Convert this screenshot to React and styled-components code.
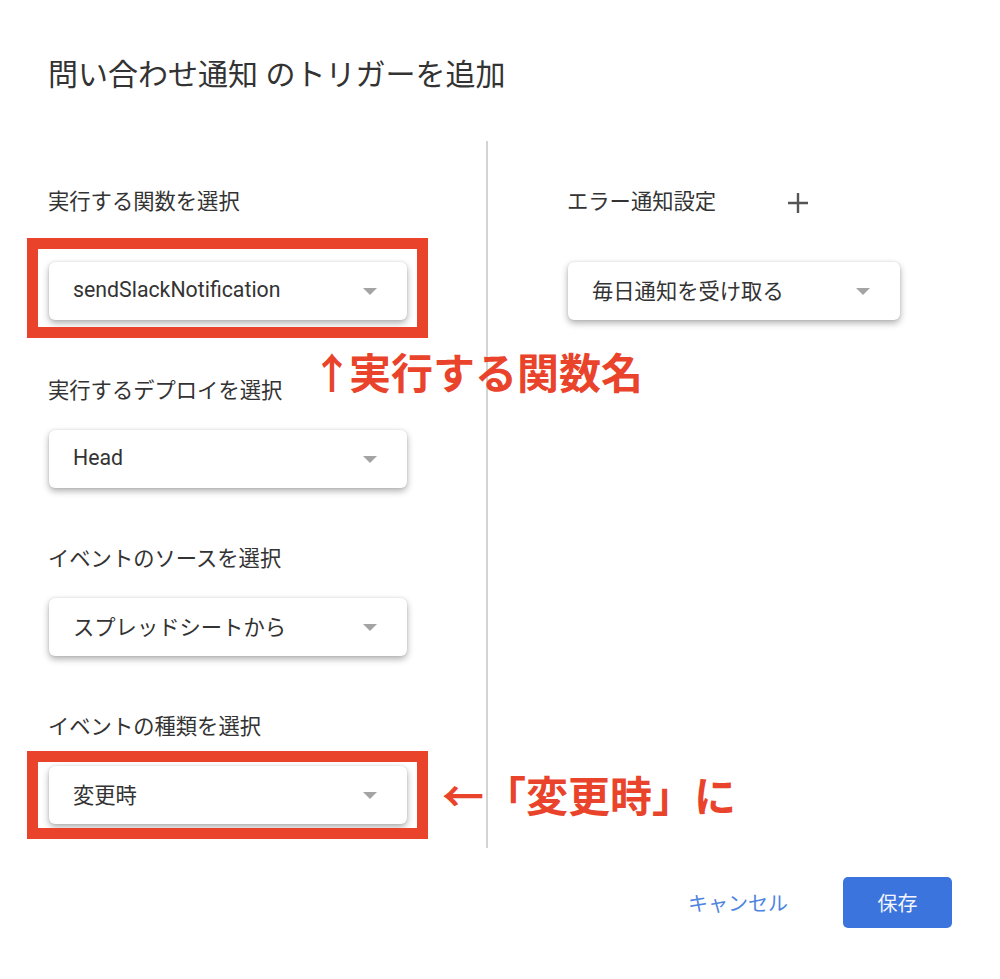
import styled, { createGlobalStyle } from "styled-components";

const GlobalStyle = createGlobalStyle`
  body {
    margin: 0;
    background: #ffffff;
    font-family: "Roboto", "Noto Sans CJK JP", sans-serif;
  }
`;

export default function App() {
  return (
    <Dialog>
      <GlobalStyle />
      <Title>問い合わせ通知 のトリガーを追加</Title>
      <Body>
        <Column>
          <Field $gap={46}>
            <Label>実行する関数を選択</Label>
            <Highlight $top={24} $bottom={18}>
              <Select value="sendSlackNotification" />
            </Highlight>
          </Field>
          <Field $gap={25}>
            <Label>実行するデプロイを選択</Label>
            <Select value="Head" />
          </Field>
          <Field $gap={25}>
            <Label>イベントのソースを選択</Label>
            <Select value="スプレッドシートから" />
          </Field>
          <Field $gap={25}>
            <Label>イベントの種類を選択</Label>
            <Highlight $top={15} $bottom={15}>
              <Select value="変更時" />
            </Highlight>
          </Field>
        </Column>
        <Divider />
        <Column $right>
          <Field $gap={46}>
            <LabelRow>
              <Label>エラー通知設定</Label>
              <AddButton aria-label="追加">
                <svg width="20" height="20" viewBox="0 0 20 20">
                  <path d="M10 0v20M0 10h20" stroke="#555" strokeWidth="2.4" />
                </svg>
              </AddButton>
            </LabelRow>
            <Select value="毎日通知を受け取る" $width={332} />
          </Field>
        </Column>
      </Body>
      <Footer>
        <TextButton>キャンセル</TextButton>
        <PrimaryButton>保存</PrimaryButton>
      </Footer>
      <Note $x={311} $y={350}>
        <Arrow>↑</Arrow>実行する関数名
      </Note>
      <Note $x={442} $y={773}>←「変更時」に</Note>
    </Dialog>
  );
}

function Select({ value, $width }) {
  return (
    <SelectBox $width={$width}>
      <span>{value}</span>
      <Caret />
    </SelectBox>
  );
}

const Dialog = styled.div`
  position: relative;
  width: 1000px;
  height: 979px;
  box-sizing: border-box;
  padding: 57px 48px 0;
  background: #ffffff;
  color: #333;
`;

const Title = styled.h1`
  margin: 0;
  font-size: 30px;
  line-height: 36px;
  font-weight: 400;
  color: #333;
`;

const Body = styled.div`
  display: flex;
  margin-top: 48px;
  height: 707px;
`;

const Column = styled.div`
  display: flex;
  flex-direction: column;
  align-items: flex-start;
  gap: 57px;
  width: ${(p) => (p.$right ? "auto" : "438px")};
  padding-top: 47px;
  padding-left: ${(p) => (p.$right ? "79px" : "0")};
  box-sizing: border-box;
`;

const Divider = styled.div`
  width: 2px;
  flex-shrink: 0;
  background: #d4d4d4;
`;

const Field = styled.div`
  display: flex;
  flex-direction: column;
  align-items: flex-start;
  gap: ${(p) => p.$gap}px;
`;

const LabelRow = styled.div`
  display: flex;
  align-items: center;
`;

const Label = styled.div`
  font-size: 21.3px;
  line-height: 28px;
  color: #333;
`;

const AddButton = styled.button`
  display: flex;
  align-items: center;
  justify-content: center;
  margin-left: 72px;
  margin-top: 2px;
  padding: 0;
  border: none;
  background: none;
`;

const Highlight = styled.div`
  position: relative;
  &::before {
    content: "";
    position: absolute;
    top: -${(p) => p.$top}px;
    bottom: -${(p) => p.$bottom}px;
    left: -21px;
    right: -21px;
    border: 11px solid #e9442b;
    pointer-events: none;
  }
`;

const SelectBox = styled.div`
  display: flex;
  align-items: center;
  justify-content: space-between;
  width: ${(p) => p.$width || 358}px;
  height: 58px;
  margin-left: 1px;
  box-sizing: border-box;
  padding: 0 30px 3px 24px;
  border-radius: 6px;
  background: #ffffff;
  box-shadow: 0 3px 7px rgba(0, 0, 0, 0.32), 0 0 2px rgba(0, 0, 0, 0.12);
  font-size: 21.3px;
  color: #333;
`;

const Caret = styled.span`
  width: 0;
  height: 0;
  margin-top: 3px;
  border-left: 7px solid transparent;
  border-right: 7px solid transparent;
  border-top: 7px solid #a4a4a4;
`;

const Footer = styled.div`
  display: flex;
  justify-content: flex-end;
  align-items: center;
  gap: 39px;
  margin-top: 29px;
`;

const TextButton = styled.button`
  height: 51px;
  padding: 0 16px;
  border: none;
  background: none;
  font-family: "Roboto", "Noto Sans CJK JP", sans-serif;
  font-size: 20px;
  color: #4d84e0;
`;

const PrimaryButton = styled.button`
  width: 109px;
  height: 51px;
  border: none;
  border-radius: 5px;
  background: #3b74dc;
  font-family: "Roboto", "Noto Sans CJK JP", sans-serif;
  font-size: 20px;
  color: #f2f5fc;
`;

const Note = styled.div`
  position: absolute;
  left: ${(p) => p.$x}px;
  top: ${(p) => p.$y}px;
  font-family: "Noto Sans CJK JP", sans-serif;
  font-size: 42px;
  line-height: 42px;
  font-weight: 700;
  color: #e9442b;
  white-space: nowrap;
`;

const Arrow = styled.span`
  margin-right: -4px;
`;
